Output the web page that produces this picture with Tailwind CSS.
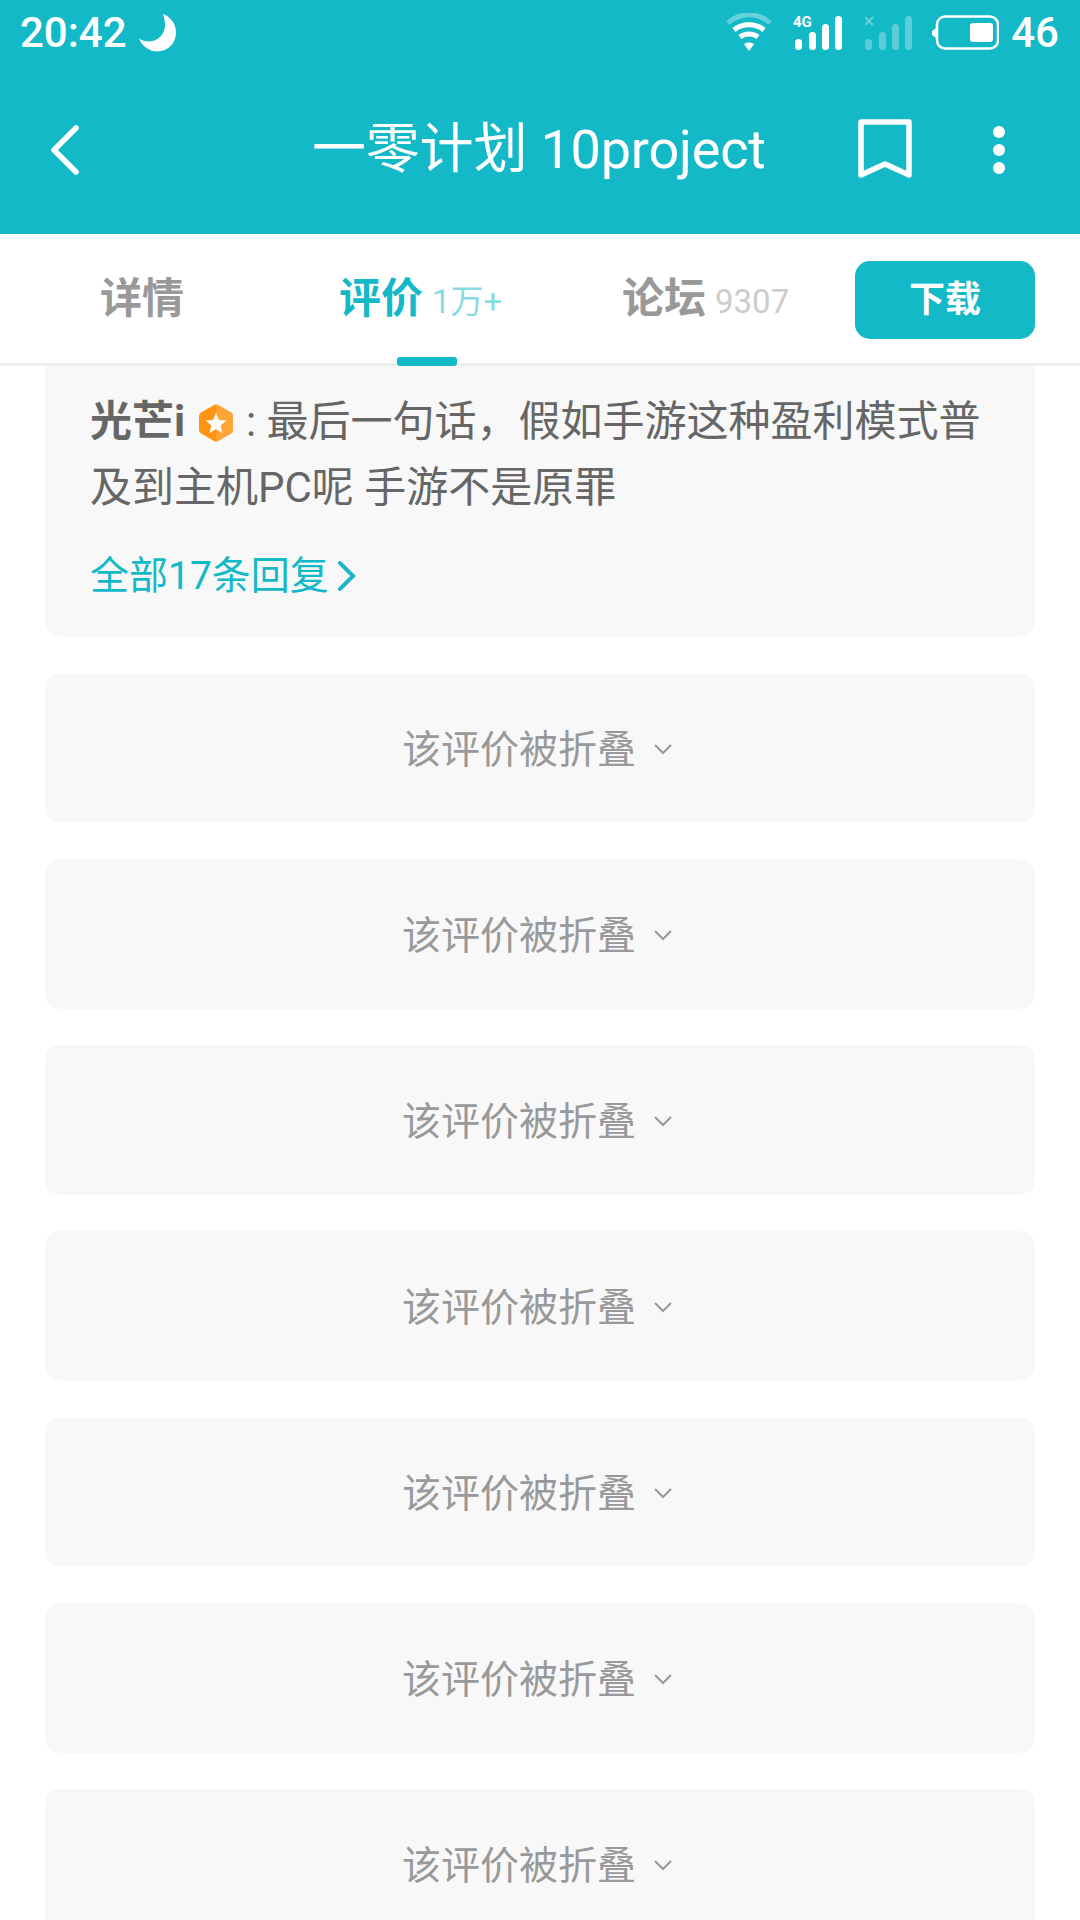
<!DOCTYPE html>
<html lang="zh-CN">
<head>
    <meta charset="UTF-8">
    <meta name="viewport" content="width=device-width, initial-scale=1.0">
    <title>一零计划 10project</title>
    <script src="https://cdn.jsdelivr.net/npm/@tailwindcss/browser@4"></script>
</head>
<body class="bg-white font-['Roboto','Noto_Sans_CJK_SC',sans-serif]">
    <div class="w-[1080px] h-[1920px] overflow-hidden flex flex-col">

        <!-- status bar + toolbar -->
        <header class="bg-[#14b9c8] h-[234px] text-white shrink-0">
            <div class="h-[66px] flex items-center pl-[20px] pr-[21px]">
                <span class="text-[42px] font-medium leading-none">20:42</span>
                <svg class="ml-[12px] w-[38px] h-[38px]" viewBox="0 0 38 38"><path d="M24 0C32 3 37 10 37 18.500C37 29 29 37.500 18.500 37.500C10 37.500 3 32 0 24.500C3 26.500 6 27.500 9.500 27.500C19 27.500 26 20 26 11C26 7 25 3 24 0Z" fill="#fff"/></svg>
                <svg class="ml-auto w-[46px] h-[40px]" viewBox="0 0 46 40" fill="none" stroke="#fff" stroke-width="5">
                    <path d="M2 10C14 -1 32 -1 44 10" stroke-opacity=".35"/>
                    <path d="M8 17C16 10 30 10 38 17"/>
                    <path d="M14 24C19 20 27 20 32 24"/>
                    <path d="M18 31L23 38L28 31C25 29 21 29 18 31Z" fill="#fff" stroke="none"/>
                </svg>
                <svg class="ml-[23px] w-[48px] h-[36px] overflow-visible" viewBox="0 0 48 36" fill="#fff">
                    <text x="-2" y="12" font-size="15" font-weight="700" font-family="Roboto">4G</text>
                    <rect x="0" y="24" width="7" height="11" rx="3.5"/>
                    <rect x="14" y="17" width="7" height="18" rx="3.5"/>
                    <rect x="27" y="9" width="7" height="26" rx="3.5"/>
                    <rect x="40" y="1" width="7" height="34" rx="3.5"/>
                </svg>
                <svg class="ml-[22px] w-[48px] h-[36px]" viewBox="0 0 48 36" fill="#fff" fill-opacity=".3">
                    <rect x="0" y="24" width="7" height="11" rx="3.5"/>
                    <rect x="14" y="17" width="7" height="18" rx="3.5"/>
                    <rect x="27" y="9" width="7" height="26" rx="3.5"/>
                    <rect x="40" y="1" width="7" height="34" rx="3.5"/>
                    <path d="M0 2L8 10M8 2L0 10" stroke="#fff" stroke-opacity=".35" stroke-width="2"/>
                </svg>
                <svg class="ml-[18px] w-[68px] h-[36px]" viewBox="0 0 68 36" fill="none">
                    <rect x="6" y="1.5" width="61" height="32" rx="8" stroke="#fff" stroke-width="2.5"/>
                    <path d="M5 13L1 16V20L5 23Z" fill="#fff"/>
                    <rect x="39" y="8" width="23" height="19" rx="3" fill="#fff"/>
                </svg>
                <span class="ml-[12px] text-[42px] font-medium leading-none">46</span>
            </div>
            <div class="relative h-[168px] flex items-center">
                <svg class="ml-[49px] w-[32px] h-[52px]" viewBox="0 0 32 52" fill="none" stroke="#fff" stroke-width="5.5" stroke-linecap="round" stroke-linejoin="round"><path d="M27 4L5 26L27 48"/></svg>
                <h1 class="absolute left-[312px] text-[54px] tracking-[-0.2px] leading-none whitespace-nowrap">一零计划 10project</h1>
                <svg class="ml-auto w-[54px] h-[62px]" viewBox="0 0 54 62" fill="none" stroke="#fff" stroke-width="5.5" stroke-linejoin="round"><path d="M3 3H51V56L27 45L3 56Z"/></svg>
                <svg class="ml-[80px] mr-[74px] w-[14px] h-[50px]" viewBox="0 0 14 50" fill="#fff"><circle cx="7" cy="7" r="6"/><circle cx="7" cy="25" r="6"/><circle cx="7" cy="43" r="6"/></svg>
            </div>
        </header>

        <!-- tabs -->
        <nav class="relative h-[132px] shrink-0 border-b-[3px] border-[#eeeeee] flex items-center">
            <div class="absolute left-[100px] top-[35px] text-[42px] leading-[60px] font-bold text-[#999999]">详情</div>
            <div class="absolute left-[339px] top-[35px] flex items-baseline text-[#14b9c8] leading-[60px]">
                <span class="text-[42px] font-bold">评价</span>
                <span class="ml-[9px] text-[33px] opacity-50">1万+</span>
            </div>
            <div class="absolute left-[622px] top-[35px] flex items-baseline leading-[60px]">
                <span class="text-[42px] font-bold text-[#999999]">论坛</span>
                <span class="ml-[9px] text-[33px] text-[#cccccc]">9307</span>
            </div>
            <button class="absolute left-[855px] top-[27px] w-[180px] h-[78px] rounded-[15px] bg-[#14b9c8] text-white text-[36px] font-bold">下载</button>
            <div class="absolute left-[397px] bottom-[-3px] w-[60px] h-[9px] rounded-[3px] bg-[#14b9c8]"></div>
        </nav>

        <!-- list -->
        <main class="flex flex-col gap-[36px] px-[45px]">
            <div class="bg-[#f8f8f8] rounded-b-[15px] h-[271px] px-[45px] pt-[23px] shrink-0">
                <p class="text-[42px] leading-[66px] text-[#666666]">
                    <b>光芒i</b>
                    <svg class="inline-block align-[-6px] w-[36px] h-[38px] mx-[2px]" viewBox="0 0 36 38">
                        <path d="M16 1Q18 0 20 1L33 8.500Q35 10 35 12V26Q35 28 33 29.500L20 37Q18 38 16 37L3 29.500Q1 28 1 26V12Q1 10 3 8.500Z" fill="#ff9414"/>
                        <path d="M18 0.500Q19 0.500 20 1L33 8.500Q35 10 35 12V26Q35 28 33 29.500L20 37Q19 37.500 18 37.500Z" fill="#ffa535"/>
                        <path d="M18 9L21 16L28.500 16.500L22.500 21.500L24.500 29L18 25L11.500 29L13.500 21.500L7.500 16.500L15 16Z" fill="#fff"/>
                    </svg>
                    : 最后一句话，假如手游这种盈利模式普及到主机PC呢 手游不是原罪
                </p>
                <div class="mt-[31px] flex items-center text-[39px] leading-[48px] text-[#14b9c8]">
                    全部17条回复
                    <svg class="ml-[9px] w-[18px] h-[30px]" viewBox="0 0 18 30" fill="none" stroke="#20b8c6" stroke-width="4" stroke-linecap="round"><path d="M2 2L15 15L2 28"/></svg>
                </div>
            </div>

            <div class="bg-[#f8f8f8] rounded-[15px] h-[150px] pt-[5px] shrink-0 flex items-center justify-center text-[39px] text-[#999999]">该评价被折叠<svg class="ml-[18px] mr-[6px] mb-[4px] w-[18px] h-[12px]" viewBox="0 0 18 12" fill="none" stroke="#999999" stroke-width="2"><path d="M1 2L9 10L17 2"/></svg></div>
            <div class="bg-[#f8f8f8] rounded-[15px] h-[150px] pt-[5px] shrink-0 flex items-center justify-center text-[39px] text-[#999999]">该评价被折叠<svg class="ml-[18px] mr-[6px] mb-[4px] w-[18px] h-[12px]" viewBox="0 0 18 12" fill="none" stroke="#999999" stroke-width="2"><path d="M1 2L9 10L17 2"/></svg></div>
            <div class="bg-[#f8f8f8] rounded-[15px] h-[150px] pt-[5px] shrink-0 flex items-center justify-center text-[39px] text-[#999999]">该评价被折叠<svg class="ml-[18px] mr-[6px] mb-[4px] w-[18px] h-[12px]" viewBox="0 0 18 12" fill="none" stroke="#999999" stroke-width="2"><path d="M1 2L9 10L17 2"/></svg></div>
            <div class="bg-[#f8f8f8] rounded-[15px] h-[150px] pt-[5px] shrink-0 flex items-center justify-center text-[39px] text-[#999999]">该评价被折叠<svg class="ml-[18px] mr-[6px] mb-[4px] w-[18px] h-[12px]" viewBox="0 0 18 12" fill="none" stroke="#999999" stroke-width="2"><path d="M1 2L9 10L17 2"/></svg></div>
            <div class="bg-[#f8f8f8] rounded-[15px] h-[150px] pt-[5px] shrink-0 flex items-center justify-center text-[39px] text-[#999999]">该评价被折叠<svg class="ml-[18px] mr-[6px] mb-[4px] w-[18px] h-[12px]" viewBox="0 0 18 12" fill="none" stroke="#999999" stroke-width="2"><path d="M1 2L9 10L17 2"/></svg></div>
            <div class="bg-[#f8f8f8] rounded-[15px] h-[150px] pt-[5px] shrink-0 flex items-center justify-center text-[39px] text-[#999999]">该评价被折叠<svg class="ml-[18px] mr-[6px] mb-[4px] w-[18px] h-[12px]" viewBox="0 0 18 12" fill="none" stroke="#999999" stroke-width="2"><path d="M1 2L9 10L17 2"/></svg></div>
            <div class="bg-[#f8f8f8] rounded-[15px] h-[150px] pt-[5px] shrink-0 flex items-center justify-center text-[39px] text-[#999999]">该评价被折叠<svg class="ml-[18px] mr-[6px] mb-[4px] w-[18px] h-[12px]" viewBox="0 0 18 12" fill="none" stroke="#999999" stroke-width="2"><path d="M1 2L9 10L17 2"/></svg></div>
        </main>
    </div>
</body>
</html>
